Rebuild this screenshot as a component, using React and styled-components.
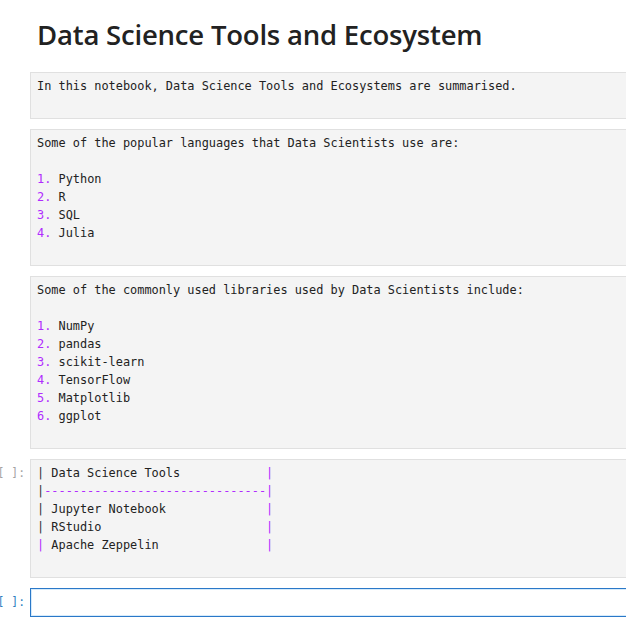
import React from "react";
import styled, { createGlobalStyle } from "styled-components";

const GlobalStyle = createGlobalStyle`
  body {
    margin: 0;
    background: #ffffff;
    overflow: hidden;
  }
`;

const Notebook = styled.div`
  display: flex;
  flex-direction: column;
  gap: 10px;
  width: 628px;
`;

const Row = styled.div`
  display: flex;
  align-items: flex-start;
`;

const Prompt = styled.div`
  display: flex;
  justify-content: flex-end;
  flex: 0 0 30px;
  width: 30px;
  min-width: 0;
  box-sizing: border-box;
  padding-right: 5px;
  padding-top: 5px;
  white-space: pre;
  font-family: "DejaVu Sans Mono", "Liberation Mono", monospace;
  font-size: 11.4px;
  line-height: 18px;
  color: ${(p) => (p.active ? "#307fc1" : "#a3a3a3")};
`;

const Title = styled.h1`
  flex: 1;
  margin: 0;
  padding: 18px 0 10px 7px;
  font-family: "Open Sans", "Noto Sans", sans-serif;
  font-size: 27.5px;
  font-weight: 600;
  line-height: 34px;
  letter-spacing: -0.2px;
  color: #222222;
`;

const Cell = styled.div`
  flex: 1;
  min-width: 0;
  box-sizing: border-box;
  min-height: ${(p) => (p.active ? "29px" : "auto")};
  padding: 4px 6px 5px 6px;
  background: ${(p) => (p.active ? "#ffffff" : "#f4f4f4")};
  border: 1px solid ${(p) => (p.active ? "#2a78c8" : "#e0e0e0")};
  box-shadow: ${(p) => (p.active ? "inset 0 0 0 1px #d6ebfb" : "none")};
  font-family: "DejaVu Sans Mono", "Liberation Mono", monospace;
  font-size: 11.9px;
  line-height: 18px;
  color: #222222;
`;

const Line = styled.div`
  white-space: pre;
  height: 18px;
`;

const Mark = styled.span`
  color: #b02cff;
`;

const Pipe = styled.span`
  color: #333333;
`;

const languages = ["Python", "R", "SQL", "Julia"];
const libraries = ["NumPy", "pandas", "scikit-learn", "TensorFlow", "Matplotlib", "ggplot"];

const List = ({ items }) =>
  items.map((item, i) => (
    <Line key={item}>
      <Mark>{i + 1}. </Mark>
      {item}
    </Line>
  ));

export default () => (
  <>
    <GlobalStyle />
    <Notebook>
      <Row>
        <Prompt />
        <Title>Data Science Tools and Ecosystem</Title>
      </Row>
      <Row>
        <Prompt />
        <Cell>
          <Line>In this notebook, Data Science Tools and Ecosystems are summarised.</Line>
          <Line />
        </Cell>
      </Row>
      <Row>
        <Prompt />
        <Cell>
          <Line>Some of the popular languages that Data Scientists use are:</Line>
          <Line />
          <List items={languages} />
          <Line />
        </Cell>
      </Row>
      <Row>
        <Prompt />
        <Cell>
          <Line>Some of the commonly used libraries used by Data Scientists include:</Line>
          <Line />
          <List items={libraries} />
          <Line />
        </Cell>
      </Row>
      <Row>
        <Prompt>[ ]:</Prompt>
        <Cell>
          <Line>
            <Pipe>|</Pipe> Data Science Tools            <Mark>|</Mark>
          </Line>
          <Line>
            <Pipe>|</Pipe>
            <Mark>-------------------------------|</Mark>
          </Line>
          <Line>
            <Pipe>|</Pipe> Jupyter Notebook              <Mark>|</Mark>
          </Line>
          <Line>
            <Pipe>|</Pipe> RStudio                       <Mark>|</Mark>
          </Line>
          <Line>
            <Mark>|</Mark> Apache Zeppelin               <Mark>|</Mark>
          </Line>
          <Line />
        </Cell>
      </Row>
      <Row>
        <Prompt active>[ ]:</Prompt>
        <Cell active />
      </Row>
    </Notebook>
  </>
);
